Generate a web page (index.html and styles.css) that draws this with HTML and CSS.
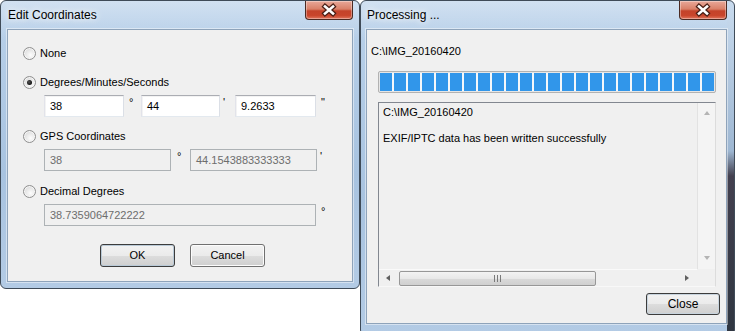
FILE: index.html
```html
<!DOCTYPE html>
<html lang="en">
<head>
    <meta charset="UTF-8">
    <meta name="viewport" content="width=device-width, initial-scale=1.0">
    <title>Edit Coordinates</title>
    <link rel="stylesheet" href="styles.css">
</head>
<body>
    <div class="desk">
        <!-- left dialog -->
        <div class="win win-edit">
            <div class="titlebar">
                <span class="title">Edit Coordinates</span>
                <span class="close-x">
                    <svg width="46" height="18" viewBox="0 0 46 18">
                        <path d="M19 5.5 L27 12.5 M27 5.5 L19 12.5" stroke="#4a1f16" stroke-width="5" stroke-linecap="square" fill="none"/>
                        <path d="M19 5.5 L27 12.5 M27 5.5 L19 12.5" stroke="#fff" stroke-width="2.6" stroke-linecap="square" fill="none"/>
                    </svg>
                </span>
            </div>
            <div class="client edit-client">
                <div class="option"><span class="radio"></span>None</div>

                <div class="option gap-dms"><span class="radio checked"></span>Degrees/Minutes/Seconds</div>
                <div class="fields">
                    <div class="textbox w80">38</div><span class="unit u17">°</span>
                    <div class="textbox w79">44</div><span class="unit u15">'</span>
                    <div class="textbox w81">9.2633</div><span class="unit">"</span>
                </div>

                <div class="option gap-gps"><span class="radio"></span>GPS Coordinates</div>
                <div class="fields">
                    <div class="textbox off w127">38</div><span class="unit u19">°</span>
                    <div class="textbox off w127">44.1543883333333</div><span class="unit u-tight">'</span>
                </div>

                <div class="option gap-dec"><span class="radio"></span>Decimal Degrees</div>
                <div class="fields">
                    <div class="textbox off w272">38.7359064722222</div><span class="unit">°</span>
                </div>

                <div class="buttons">
                    <span class="btn btn-default">OK</span>
                    <span class="btn">Cancel</span>
                </div>
            </div>
        </div>

        <!-- right dialog -->
        <div class="win win-proc">
            <div class="titlebar">
                <span class="title">Processing ...</span>
                <span class="close-x">
                    <svg width="46" height="18" viewBox="0 0 46 18">
                        <path d="M19 5.5 L27 12.5 M27 5.5 L19 12.5" stroke="#4a1f16" stroke-width="5" stroke-linecap="square" fill="none"/>
                        <path d="M19 5.5 L27 12.5 M27 5.5 L19 12.5" stroke="#fff" stroke-width="2.6" stroke-linecap="square" fill="none"/>
                    </svg>
                </span>
            </div>
            <div class="client proc-client">
                <div class="file-label">C:\IMG_20160420</div>
                <div class="progress"><div class="progress-fill"></div></div>
                <div class="log">
                    <div class="log-text">C:\IMG_20160420<br><br>EXIF/IPTC data has been written successfully</div>
                    <div class="vscroll">
                        <span class="arrow-up"></span>
                        <span class="arrow-down"></span>
                    </div>
                    <div class="hscroll">
                        <span class="arrow-left"></span>
                        <span class="thumb"><span class="grip"></span></span>
                        <span class="arrow-right"></span>
                    </div>
                    <div class="corner"></div>
                </div>
                <div class="close-row">
                    <span class="btn btn-close">Close</span>
                </div>
            </div>
        </div>
    </div>
</body>
</html>
```

FILE: styles.css
```css
body {
    margin: 0;
    background: #fff;
    font-family: "Liberation Sans", Arial, sans-serif;
    font-size: 11px;
    color: #000;
}

.desk {
    display: flex;
    align-items: flex-start;
}

/* aero window frame */
.win {
    box-sizing: border-box;
    border: 1px solid #3f4b58;
    border-radius: 6px;
    background:
        linear-gradient(to bottom, rgba(255,255,255,0.35), rgba(255,255,255,0) 40px),
        linear-gradient(to bottom, #b9d1ea, #a8c3e0 60%, #b3cbe5);
}

.win-edit {
    width: 360px;
    height: 289px;
    padding: 0 6px 6px 6px;
}

.win-proc {
    width: 375px;
    height: 336px;
    padding: 0 7px 7px 5px;
    background:
        linear-gradient(to bottom, #c9dbee 0, #9eb7d2 150px, #43404f 175px, #2f3641 100%) right top / 7px 100% no-repeat,
        linear-gradient(to bottom, rgba(255,255,255,0.35), rgba(255,255,255,0) 40px),
        linear-gradient(to bottom, #b9d1ea, #a8c3e0 60%, #b3cbe5);
}

.titlebar {
    height: 28px;
    display: flex;
    justify-content: space-between;
    align-items: flex-start;
}

.title {
    font-family: "Liberation Sans", Arial, sans-serif;
    font-size: 12px;
    line-height: 28px;
    padding-left: 1px;
    text-shadow: 0 0 6px #fff, 0 0 10px rgba(255,255,255,0.9);
}

.close-x {
    display: block;
    width: 46px;
    height: 18px;
    border: 1px solid #4b2a22;
    border-top: none;
    border-radius: 0 0 4px 4px;
    background: linear-gradient(to bottom, #e8a899 0%, #d98068 45%, #c4432a 55%, #c8452b 80%, #e0755c 100%);
    box-shadow: inset 0 0 0 1px rgba(255,255,255,0.35);
}

.close-x svg {
    display: block;
}

.client {
    box-sizing: border-box;
    background: #f0f0f0;
    border: 1px solid #8ea3ba;
    box-shadow: 0 0 0 1px rgba(255,255,255,0.45);
}

.edit-client {
    height: 253px;
    padding: 15px 0 0 15px;
}

/* radio options */
.option {
    display: flex;
    align-items: center;
    height: 16px;
    line-height: 16px;
}

.gap-dms { margin-top: 13px; }
.gap-gps { margin-top: 11px; }
.gap-dec { margin-top: 12px; }

.radio {
    box-sizing: border-box;
    width: 13px;
    height: 13px;
    margin-right: 4px;
    border-radius: 50%;
    border: 1px solid #8f8f8f;
    background: radial-gradient(circle at 60% 65%, #fdfdfd 0, #e9e9e9 45%, #cfcfcf 100%);
    box-shadow: inset 0 0 0 1px #f6f6f6;
    position: relative;
}

.radio.checked::after {
    content: "";
    position: absolute;
    left: 3px;
    top: 3px;
    width: 5px;
    height: 5px;
    border-radius: 50%;
    background: radial-gradient(circle at 40% 40%, #555 0, #111 70%);
}

.fields {
    display: flex;
    margin: 5px 0 0 21px;
    height: 22px;
}

.fields + .option { }

.textbox {
    box-sizing: border-box;
    height: 22px;
    line-height: 20px;
    padding-left: 5px;
    background: #fff;
    border: 1px solid;
    border-color: #abadb3 #dbdfe6 #e3e9ef #e2e3ea;
    box-shadow: inset 1px 1px 0 #f3f3f3;
    white-space: nowrap;
    overflow: hidden;
}

.textbox.off {
    background: #f0f0f0;
    color: #6d6d6d;
    border-color: #adb2b5;
    box-shadow: none;
}

.w79 { width: 79px; }
.w80 { width: 80px; }
.w81 { width: 81px; }
.w127 { width: 127px; }
.w272 { width: 272px; }

.unit {
    box-sizing: border-box;
    padding-left: 5px;
    line-height: 14px;
}

.u15 { width: 15px; padding-left: 3px; }
.u17 { width: 17px; }
.u19 { width: 19px; padding-left: 6px; }
.u-tight { padding-left: 3px; }

/* buttons */
.buttons {
    display: flex;
    gap: 15px;
    margin: 18px 0 0 77px;
}

.btn {
    box-sizing: border-box;
    display: block;
    width: 75px;
    height: 23px;
    line-height: 21px;
    text-align: center;
    border: 1px solid #707070;
    border-radius: 3px;
    background: linear-gradient(to bottom, #f2f2f2 0%, #ebebeb 50%, #dddddd 51%, #cfcfcf 100%);
    box-shadow: inset 0 0 0 1px #fcfcfc;
}

.btn-default {
    border-color: #3c3c3c;
    box-shadow: inset 0 0 0 1px #b9c9d6;
}

/* processing window */
.proc-client {
    height: 295px;
    padding-top: 15px;
}

.file-label {
    line-height: 13px;
    padding-left: 4px;
}

.progress {
    box-sizing: border-box;
    width: 338px;
    height: 22px;
    margin: 13px 0 0 11px;
    padding: 1px;
    border: 1px solid #b2b2b2;
    border-radius: 2px;
    background: #e6e6e6;
}

.progress-fill {
    height: 100%;
    background: repeating-linear-gradient(to right, #3196ea 0, #3196ea 12px, #f4f7fa 12px, #f4f7fa 14px);
}

.log {
    box-sizing: border-box;
    width: 338px;
    height: 185px;
    margin: 9px 0 0 11px;
    border: 1px solid #828790;
    border-right-color: #dcdcdc;
    border-bottom-color: #f8f8f8;
    display: grid;
    grid-template-columns: 1fr 18px;
    grid-template-rows: 1fr 17px;
    background: #f0f0f0;
}

.log-text {
    padding: 3px 0 0 4px;
    line-height: 13px;
    white-space: nowrap;
    overflow: hidden;
}

.vscroll {
    background: #f4f4f4;
    border-left: 1px solid #e2e2e2;
    display: flex;
    flex-direction: column;
    justify-content: space-between;
    align-items: center;
    padding: 8px 0 9px;
}

.arrow-up,
.arrow-down {
    width: 0;
    height: 0;
    border-left: 3.5px solid transparent;
    border-right: 3.5px solid transparent;
}

.arrow-up { border-bottom: 4px solid #b4b4b4; }
.arrow-down { border-top: 4px solid #b4b4b4; }

.hscroll {
    display: flex;
    align-items: center;
    border-top: 1px solid #fafafa;
}

.arrow-left,
.arrow-right {
    width: 0;
    height: 0;
    border-top: 3.5px solid transparent;
    border-bottom: 3.5px solid transparent;
}

.arrow-left {
    border-right: 4px solid #606060;
    margin: 0 9px 0 7px;
}

.arrow-right {
    border-left: 4px solid #606060;
    margin-left: auto;
    margin-right: 8px;
}

.thumb {
    box-sizing: border-box;
    width: 197px;
    height: 15px;
    border: 1px solid #979797;
    border-radius: 2px;
    background: linear-gradient(to bottom, #f3f3f3, #e8e8e8 50%, #d9d9d9 51%, #d0d0d0);
    display: flex;
    justify-content: center;
    align-items: center;
}

.grip {
    width: 7px;
    height: 7px;
    background: repeating-linear-gradient(to right, #7a7a7a 0, #7a7a7a 1px, transparent 1px, transparent 3px);
}

.corner {
    background: #f0f0f0;
}

.close-row {
    display: flex;
    justify-content: flex-end;
    margin: 6px 6px 0 0;
}

.btn-close {
    width: 74px;
    height: 22px;
    line-height: 20px;
    font-size: 12px;
    border-color: #3c3c3c;
    box-shadow: inset 0 0 0 1px #c8d4de;
}
```
